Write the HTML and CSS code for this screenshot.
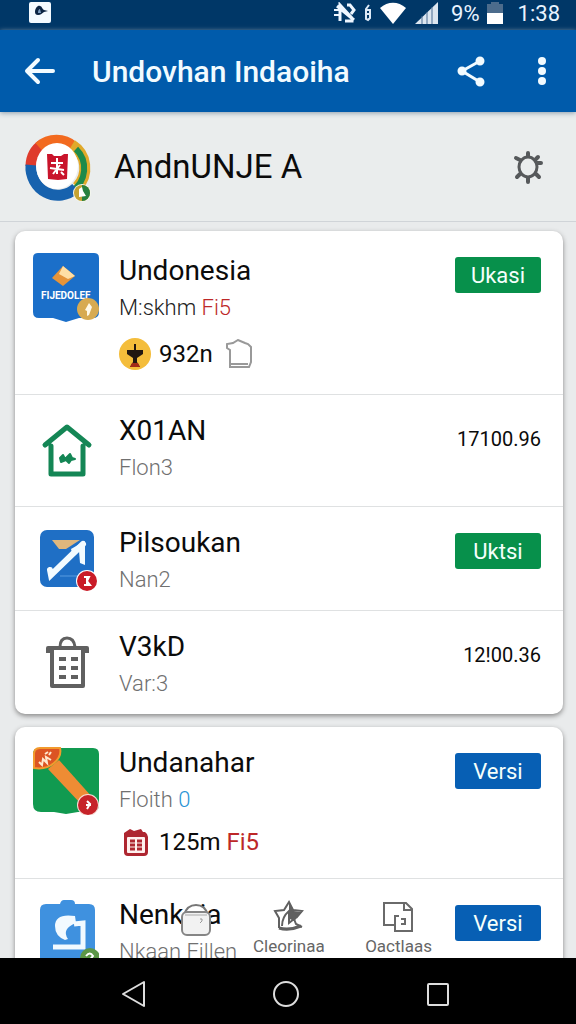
FILE: index.html
```
<!DOCTYPE html>
<html lang="id">
<head>
    <meta charset="UTF-8">
    <meta name="viewport" content="width=device-width, initial-scale=1.0">
    <title>Undovhan Indaoiha</title>
    <link rel="stylesheet" href="styles.css">
</head>
<body>

    <!-- Status bar -->
    <div class="status-bar">
        <svg class="status-app" width="22" height="22" viewBox="0 0 22 22">
            <rect width="22" height="21" rx="2" fill="#f4faff"/>
            <path d="M6 10c0-4 3-7 5-6 2 0 2 3 4 4l4 1-4 1c-2 1-3 3-6 3-2 0-3-1-3-3z" fill="#0b2343"/>
            <path d="M9 11c0-3 1-4 2-4l1 4z" fill="#7b9cc0"/>
        </svg>
        <svg width="24" height="22" viewBox="0 0 24 22" fill="none" stroke="#eef6ff" stroke-width="3">
            <path d="M4 4l17 14M7 19V3l12 13v3h-7M14 3h3l4 5-3 4"/>
            <path d="M1 8h5M1 13h5" stroke-width="2"/>
        </svg>
        <svg width="8" height="18" viewBox="0 0 8 18" fill="none" stroke="#dce9f7" stroke-width="2">
            <path d="M5 1L2 5v5h4V6H2M2 10v5l2 1 2-2v-4"/>
        </svg>
        <svg width="28" height="23" viewBox="0 0 28 23">
            <path d="M1 6C9-1 19-1 27 6L14 22z" fill="#fff"/>
        </svg>
        <svg width="26" height="24" viewBox="0 0 26 24">
            <path d="M1 23L24 1v22z" fill="#dce6f0"/>
            <path d="M8 15v8M13 11v12M18 6v17" stroke="#4b6c92" stroke-width="1"/>
        </svg>
        <span class="battery-text">9%</span>
        <svg width="16" height="22" viewBox="0 0 16 22">
            <path d="M0 2h4V0h8v2h4v9H0z" fill="#4c6c8c"/>
            <path d="M0 11h16v11H0z" fill="#fff"/>
        </svg>
        <span class="clock">1:38</span>
    </div>

    <!-- App bar -->
    <header class="app-bar">
        <button class="icon-button" aria-label="Back">
            <svg width="32" height="30" viewBox="0 0 32 30" fill="none" stroke="#f2fbff" stroke-width="4" stroke-linecap="round" stroke-linejoin="round">
                <path d="M29 15H4M14 4L3 15l11 11"/>
            </svg>
        </button>
        <h1>Undovhan Indaoiha</h1>
        <button class="icon-button" aria-label="Share">
            <svg width="30" height="32" viewBox="0 0 30 32" fill="#f2fbff" stroke="#f2fbff" stroke-width="3">
                <path d="M24 6L6 16l18 11" fill="none"/>
                <circle cx="24" cy="6" r="3"/>
                <circle cx="6" cy="16" r="3"/>
                <circle cx="24" cy="27" r="3"/>
            </svg>
        </button>
        <button class="icon-button" aria-label="More options">
            <svg width="8" height="30" viewBox="0 0 8 30" fill="#f2fbff">
                <circle cx="4" cy="5" r="4"/>
                <circle cx="4" cy="15" r="4"/>
                <circle cx="4" cy="25" r="4"/>
            </svg>
        </button>
    </header>

    <main class="content">
        <section class="profile">
            <svg width="68" height="70" viewBox="0 0 68 70">
                <g fill="none" stroke-width="11">
                    <path d="M7 34a27 27 0 0 1 12-22" stroke="#df3b2c"/>
                    <path d="M15 15a27 28 0 0 1 35 0" stroke="#f26a1f"/>
                    <path d="M48 13a27 27 0 0 1 5 42" stroke="#e0a92a"/>
                    <path d="M52 17a27 27 0 0 1-4 42" stroke="#1d8a4a" stroke-width="6"/>
                    <path d="M7 33a27 28 0 0 0 45 23" stroke="#1762ae"/>
                </g>
                <ellipse cx="33" cy="34" rx="21" ry="23" fill="#fff"/>
                <path d="M23 22h5l2 2h7l3-2h4l-1 25-9 1-10-1z" fill="#c9142b"/>
                <path d="M27 31h12M26 36l14 2M33 26v16M29 42l7-9M37 40l3 3" stroke="#fff" stroke-width="2"/>
                <circle cx="58" cy="61" r="9" fill="#f4f7ee"/>
                <circle cx="58" cy="61" r="8" fill="#c4a332"/>
                <path d="M58 53a8 8 0 0 1 0 16z" fill="#27803f"/>
                <path d="M55 65v-8l3-2 1 4 3 5z" fill="#fff"/>
            </svg>
            <h2>AndnUNJE A</h2>
            <button class="icon-button" aria-label="Settings">
                <svg width="32" height="34" viewBox="0 0 32 34" fill="none" stroke="#56595b" stroke-width="3" stroke-linecap="round">
                    <ellipse cx="16" cy="17" rx="9" ry="10"/>
                    <path d="M16 6V3M16 28v4M8 10L4 8M24 9l2-2M25 13h4M8 24l-3 3M24 24l3 3" stroke-width="4"/>
                </svg>
            </button>
        </section>

        <section class="card">
            <article class="row row-top">
                <svg class="row-icon" width="66" height="70" viewBox="0 0 66 70">
                    <path d="M5 0h56q5 0 5 5v54q0 6-6 6H46L33 69 20 65H6q-6 0-6-6V5q0-5 5-5z" fill="#1b6fc9"/>
                    <path d="M30 13l12 10-12 10-11-8z" fill="#e5943a"/>
                    <path d="M30 13l12 10-7 3-9-5z" fill="#ffdfa5"/>
                    <text x="8" y="46" class="badge-text">FIJEDOLEF</text>
                    <circle cx="55" cy="56" r="11" fill="#d7aa51"/>
                    <path d="M56 50l3 4-3 8-2 1v-5l-2-1z" fill="#fff9e8"/>
                </svg>
                <div class="row-body">
                    <h3>Undonesia</h3>
                    <p class="dark">M:skhm <span class="red">Fi5</span></p>
                    <div class="meta">
                        <svg width="32" height="34" viewBox="0 0 32 34">
                            <circle cx="16" cy="17" r="16" fill="#f4bd3b"/>
                            <path d="M8 13h16v4l-6 4v4l3 5H11l3-5v-4l-6-4z" fill="#211711"/>
                            <path d="M16 7v7" stroke="#211711" stroke-width="2"/>
                            <path d="M13 26h6l2 4H11z" fill="#a22a18"/>
                        </svg>
                        <span>932n</span>
                        <svg class="meta-jar" width="28" height="30" viewBox="0 0 28 30" fill="none" stroke="#999" stroke-width="2">
                            <path d="M5 27V11L2 9V5l6-1 5-3 7 3 3 1 3 3v15l-2 5H5z"/>
                            <path d="M5 25h18"/>
                        </svg>
                    </div>
                </div>
                <button class="action green">Ukasi</button>
            </article>

            <article class="row row-tall">
                <svg class="row-icon" width="66" height="70" viewBox="0 0 66 70" fill="none" stroke="#148655" stroke-width="4" stroke-linecap="round" stroke-linejoin="round">
                    <path d="M12 32L34 14l22 18M18 33v28h32V33" stroke-width="5"/>
                    <path d="M27 45l3-3 2 4 5-5 2 4 3 1-4 1-2 3-3-3-5 2z" fill="#148655" stroke-width="2"/>
                </svg>
                <div class="row-body">
                    <h3>X01AN</h3>
                    <p>Flon3</p>
                </div>
                <span class="amount">17100.96</span>
            </article>

            <article class="row">
                <svg class="row-icon" width="66" height="70" viewBox="0 0 66 70">
                    <rect x="7" y="5" width="54" height="57" rx="7" fill="#1f6fc5"/>
                    <path d="M19 15h28l-14 9h-7z" fill="#dfb77d"/>
                    <path d="M17 45l1 5L50 19" fill="none" stroke="#f3fbff" stroke-width="6" stroke-linecap="round"/>
                    <path d="M38 24l14-8v24l-5-2-1-12-6 5z" fill="#f3fbff"/>
                    <path d="M27 51h23" stroke="#589ce0" stroke-width="1"/>
                    <circle cx="54" cy="56" r="11" fill="#fff"/>
                    <circle cx="54" cy="56" r="10" fill="#c91b27"/>
                    <path d="M51 52h5l-2 4 3 4h-6M54 52v8" fill="none" stroke="#fff" stroke-width="2"/>
                </svg>
                <div class="row-body">
                    <h3>Pilsoukan</h3>
                    <p>Nan2</p>
                </div>
                <button class="action green">Uktsi</button>
            </article>

            <article class="row">
                <svg class="row-icon" width="66" height="70" viewBox="0 0 66 70" fill="none" stroke="#606060" stroke-width="4" stroke-linejoin="round">
                    <path d="M15 24v-5h39v5M19 20v37h31V20"/>
                    <path d="M27 18q0-9 7-9t8 9" stroke-width="3"/>
                    <path d="M26 30h7M38 30h7M26 39h7M38 39h7M26 48h7M38 48h7"/>
                </svg>
                <div class="row-body">
                    <h3>V3kD</h3>
                    <p>Var:3</p>
                </div>
                <span class="amount">12!00.36</span>
            </article>
        </section>

        <section class="card card-last">
            <article class="row">
                <svg class="row-icon" width="66" height="70" viewBox="0 0 66 70">
                    <path d="M6 3h54q6 0 6 6v50q0 8-7 8H45l-12 2-12-2H8q-8 0-8-8V9q0-6 6-6z" fill="#119a50"/>
                    <path d="M15 24l11-9 33 37-11 7z" fill="#ee8c34"/>
                    <path d="M2 5q2-2 5-2h20q2 8-6 15T1 23V8z" fill="#dc5423" stroke="#f29a2d" stroke-width="2"/>
                    <path d="M6 17l3 3 1-6 4 4-1-6 5 3M12 9l3-2M16 10l2-3" fill="none" stroke="#ffe8ce" stroke-width="2"/>
                    <circle cx="55" cy="60" r="11" fill="#f8ded7"/>
                    <circle cx="55" cy="60" r="10" fill="#c62329"/>
                    <path d="M54 56l3 3-3 5M53 60h5" fill="none" stroke="#fff" stroke-width="2"/>
                </svg>
                <div class="row-body">
                    <h3>Undanahar</h3>
                    <p>Floith <span class="blue">0</span></p>
                    <div class="meta">
                        <svg width="32" height="32" viewBox="0 0 32 32">
                            <path d="M5 7l6-4 4 2 7-2 2 3h2q3 2 3 5v15q0 4-4 4H9q-4 0-4-4z" fill="#ae2630"/>
                            <rect x="8" y="11" width="18" height="16" rx="1" fill="#fff0ee"/>
                            <path d="M11 15h5M18 15h5M11 19h5M18 19h5M11 23h5M18 23h5" stroke="#ae2630" stroke-width="3"/>
                        </svg>
                        <span>125m <span class="red">Fi5</span></span>
                    </div>
                </div>
                <button class="action blue-fill">Versi</button>
            </article>

            <article class="row">
                <svg class="row-icon" width="66" height="70" viewBox="0 0 66 70">
                    <path d="M13 7h14q1-4 4-4h7q4 0 4 4h14q6 0 6 6v57H7V13q0-6 6-6z" fill="#3f91df"/>
                    <path d="M42 19q-20-3-20 10 0 10 10 14l3-1q-7-10 8-16z" fill="#f2faff"/>
                    <path d="M41 27l9-1v24H20" fill="none" stroke="#f2faff" stroke-width="5"/>
                    <circle cx="57" cy="61" r="10" fill="#5c9647"/>
                    <path d="M53 59q4-5 7 0l-5 6" fill="none" stroke="#fff" stroke-width="2"/>
                </svg>
                <div class="row-body">
                    <h3>Nenkoia</h3>
                    <p>Nkaan Fillen</p>
                </div>
                <button class="action blue-fill">Versi</button>
            </article>
        </section>

        <!-- Floating tabs over the list -->
        <nav class="tabs">
            <button class="tab" aria-label="Bag">
                <svg width="34" height="40" viewBox="0 0 34 40">
                    <path d="M5 17Q8 7 17 7t12 10" fill="#fff" stroke="#777" stroke-width="2"/>
                    <rect x="3" y="14" width="28" height="23" rx="5" fill="#f2f2f2" stroke="#858585" stroke-width="2"/>
                    <path d="M6 17h22" stroke="#aaa" stroke-width="1"/>
                    <path d="M21 21h2v2l-2 2" fill="none" stroke="#999" stroke-width="1"/>
                </svg>
            </button>
            <button class="tab">
                <svg width="34" height="36" viewBox="0 0 34 36" fill="none" stroke="#606060" stroke-width="2">
                    <path d="M7 30V20L3 13l9-1 5-8 4 8 9 1-6 7"/>
                    <path d="M7 30q10 3 22-2" stroke-width="3"/>
                    <path d="M10 28q0-9 7-15v12l5-4 2 5 6 3"/>
                    <path d="M18 8l4 6 5 1-5 7-4-2z" fill="#606060"/>
                </svg>
                <span>Cleorinaa</span>
            </button>
            <button class="tab">
                <svg width="34" height="36" viewBox="0 0 34 36" fill="none" stroke="#6a6a6a" stroke-width="2">
                    <path d="M13 27H2V5h22l6 6v22H13V18h4"/>
                    <path d="M22 5v7h8M19 21h4v5h-4"/>
                </svg>
                <span>Oactlaas</span>
            </button>
        </nav>
    </main>

    <!-- System navigation -->
    <footer class="system-nav">
        <button class="icon-button" aria-label="System back">
            <svg width="28" height="28" viewBox="0 0 28 28" fill="none" stroke="#ddd" stroke-width="2" stroke-linejoin="round">
                <path d="M24 2v24L3 14z"/>
            </svg>
        </button>
        <button class="icon-button" aria-label="Home">
            <svg width="28" height="28" viewBox="0 0 28 28" fill="none" stroke="#ddd" stroke-width="2">
                <circle cx="14" cy="14" r="12"/>
            </svg>
        </button>
        <button class="icon-button" aria-label="Recent apps">
            <svg width="28" height="28" viewBox="0 0 28 28" fill="none" stroke="#ddd" stroke-width="2">
                <rect x="4" y="4" width="20" height="21" rx="1"/>
            </svg>
        </button>
    </footer>

</body>
</html>
```
FILE: styles.css
```
* {
    box-sizing: border-box;
}

body {
    margin: 0;
    height: 100vh;
    display: flex;
    flex-direction: column;
    overflow: hidden;
    background-color: #e9ebec;
    color: #0b0b0b;
    font-family: Roboto, "Liberation Sans", sans-serif;
}

h1, h2, h3, p {
    margin: 0;
    font-weight: 400;
    white-space: nowrap;
}

button {
    font-family: inherit;
    border: none;
    padding: 0;
    cursor: pointer;
}

svg {
    display: block;
    flex-shrink: 0;
}

.icon-button {
    display: flex;
    align-items: center;
    justify-content: center;
    background: none;
}

/* Status bar */
.status-bar {
    flex: 0 0 30px;
    display: flex;
    align-items: center;
    gap: 7px;
    padding: 0 16px 4px 29px;
    background-color: #003767;
    color: #e8f3ff;
    font-size: 22px;
}

.status-app {
    margin-right: auto;
}

.battery-text {
    margin-left: 4px;
}

.clock {
    margin-left: 8px;
}

/* App bar */
.app-bar {
    flex: 0 0 82px;
    display: flex;
    align-items: center;
    padding: 0 30px 0 24px;
    background-color: #005bab;
    color: #f2fbff;
    box-shadow: 0 1px 5px #8b9cac;
    z-index: 1;
}

.app-bar h1 {
    flex: 1;
    margin-left: 36px;
    font-size: 30px;
    font-weight: 500;
}

.app-bar .icon-button + .icon-button {
    margin-left: 52px;
}

.content {
    position: relative;
    flex: 1;
    min-height: 0;
    overflow: hidden;
}

.profile {
    display: flex;
    align-items: center;
    height: 110px;
    padding: 0 32px 0 24px;
    border-bottom: 1px solid #d0d4d8;
    background-color: #eaeded;
}

.profile h2 {
    flex: 1;
    margin-left: 22px;
    font-size: 33px;
}

.card {
    margin: 9px 13px 13px 15px;
    border-radius: 10px;
    background-color: #fff;
    box-shadow: 0 2px 5px #888;
}

.card-last {
    margin-bottom: 0;
}

.row {
    display: flex;
    align-items: flex-start;
    padding: 18px 22px 12px 18px;
}

.row + .row {
    border-top: 1px solid #dfe1e2;
}

.row-top {
    padding-top: 22px;
    padding-bottom: 12px;
}

.row-tall {
    padding-bottom: 20px;
}

.row-body {
    flex: 1;
    min-width: 0;
    margin-left: 20px;
}

.row h3 {
    font-size: 28px;
    line-height: 36px;
}

.row p {
    color: #707070;
    font-size: 22px;
    font-weight: 300;
    line-height: 37px;
}

.row p.dark {
    color: #222;
}

.meta {
    display: flex;
    align-items: center;
    gap: 8px;
    height: 48px;
    font-size: 24px;
}

.row-top .meta {
    height: 56px;
}

.meta-jar {
    margin-left: 4px;
}

.row .red {
    color: #bd2828;
}

.row .blue {
    color: #2a94d5;
}

.action {
    width: 86px;
    height: 36px;
    margin-top: 8px;
    border-radius: 3px;
    color: #f5fffb;
    font-size: 22px;
}

.row-top .action {
    margin-top: 4px;
}

.green {
    background-color: #07904b;
}

.blue-fill {
    background-color: #075fb4;
}

.amount {
    margin-top: 8px;
    font-size: 20px;
    line-height: 36px;
}

.badge-text {
    fill: #fff;
    font-size: 10px;
    font-weight: 700;
}

/* Tabs float above the bottom of the list */
.tabs {
    position: absolute;
    left: 31%;
    right: 25%;
    bottom: 0;
    display: flex;
    align-items: flex-start;
    justify-content: space-between;
}

.tab {
    display: flex;
    flex-direction: column;
    align-items: center;
    justify-content: flex-start;
    gap: 2px;
    height: 60px;
    background: none;
    color: #666;
    font-size: 17px;
}

/* System navigation */
.system-nav {
    flex: 0 0 66px;
    display: flex;
    align-items: center;
    justify-content: space-between;
    padding: 6px 124px 0 120px;
    background-color: #000;
}
```
